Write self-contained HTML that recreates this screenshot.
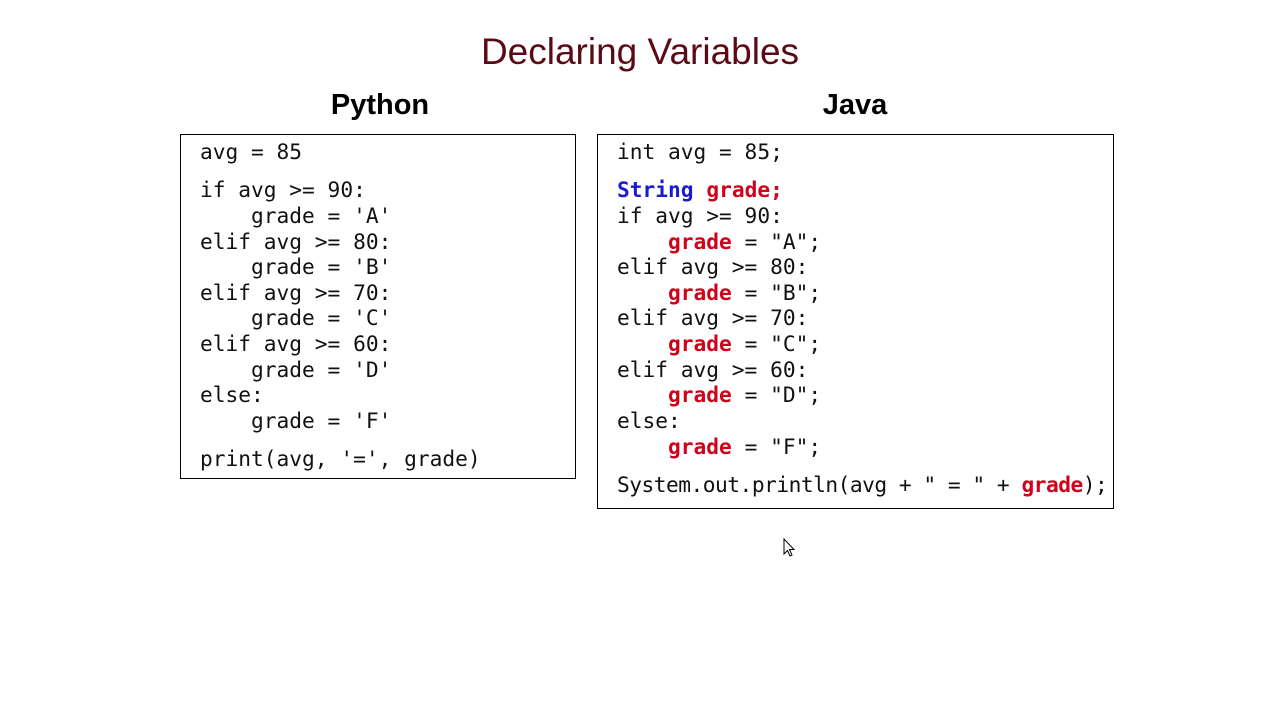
<!DOCTYPE html>
<html><head><style>
body{margin:0;width:1280px;height:720px;background:#fff;position:relative;overflow:hidden;font-family:"Liberation Sans",sans-serif}
.t{position:absolute;left:0;width:1280px;text-align:center;top:31px;font-size:37px;color:#5a0a14}
.h{position:absolute;font-weight:bold;font-size:29px;top:89px;text-align:center;width:300px}
.box{position:absolute;border:1.5px solid #000;box-sizing:border-box}
.l{position:absolute;font-family:"DejaVu Sans Mono",monospace;font-size:21.2px;line-height:26px;white-space:pre;color:#111}
.r{color:#d0021b;font-weight:bold}.b{color:#1a1ad0;font-weight:bold}
</style></head><body>
<div class="t">Declaring Variables</div>
<div class="h" style="left:230px">Python</div>
<div class="h" style="left:705px">Java</div>
<div class="box" style="left:180px;top:134px;width:396px;height:345px"></div>
<div class="box" style="left:597px;top:134px;width:517px;height:375px"></div>

<div class="l" style="left:200px;top:139px">avg = 85</div>
<div class="l" style="left:200px;top:177px">if avg &gt;= 90:</div>
<div class="l" style="left:200px;top:203px">    grade = 'A'</div>
<div class="l" style="left:200px;top:229px">elif avg &gt;= 80:</div>
<div class="l" style="left:200px;top:254px">    grade = 'B'</div>
<div class="l" style="left:200px;top:280px">elif avg &gt;= 70:</div>
<div class="l" style="left:200px;top:305px">    grade = 'C'</div>
<div class="l" style="left:200px;top:331px">elif avg &gt;= 60:</div>
<div class="l" style="left:200px;top:357px">    grade = 'D'</div>
<div class="l" style="left:200px;top:382px">else:</div>
<div class="l" style="left:200px;top:408px">    grade = 'F'</div>
<div class="l" style="left:200px;top:446px">print(avg, '=', grade)</div>

<div class="l" style="left:617px;top:139px">int avg = 85;</div>
<div class="l" style="left:617px;top:177px"><span class="b">String</span> <span class="r">grade;</span></div>
<div class="l" style="left:617px;top:203px">if avg &gt;= 90:</div>
<div class="l" style="left:617px;top:229px">    <span class="r">grade</span> = "A";</div>
<div class="l" style="left:617px;top:254px">elif avg &gt;= 80:</div>
<div class="l" style="left:617px;top:280px">    <span class="r">grade</span> = "B";</div>
<div class="l" style="left:617px;top:305px">elif avg &gt;= 70:</div>
<div class="l" style="left:617px;top:331px">    <span class="r">grade</span> = "C";</div>
<div class="l" style="left:617px;top:357px">elif avg &gt;= 60:</div>
<div class="l" style="left:617px;top:382px">    <span class="r">grade</span> = "D";</div>
<div class="l" style="left:617px;top:408px">else:</div>
<div class="l" style="left:617px;top:434px">    <span class="r">grade</span> = "F";</div>
<div class="l" style="left:617px;top:472px;letter-spacing:-0.5px">System.out.println(avg + " = " + <span class="r">grade</span>);</div>

<svg style="position:absolute;left:783px;top:538px" width="14" height="20" viewBox="0 0 14 20"><path d="M1 1 L1 16 L4.5 12.5 L7 18 L9 17 L6.5 11.5 L11 11.5 Z" fill="#fff" stroke="#000" stroke-width="1"/></svg>
</body></html>
